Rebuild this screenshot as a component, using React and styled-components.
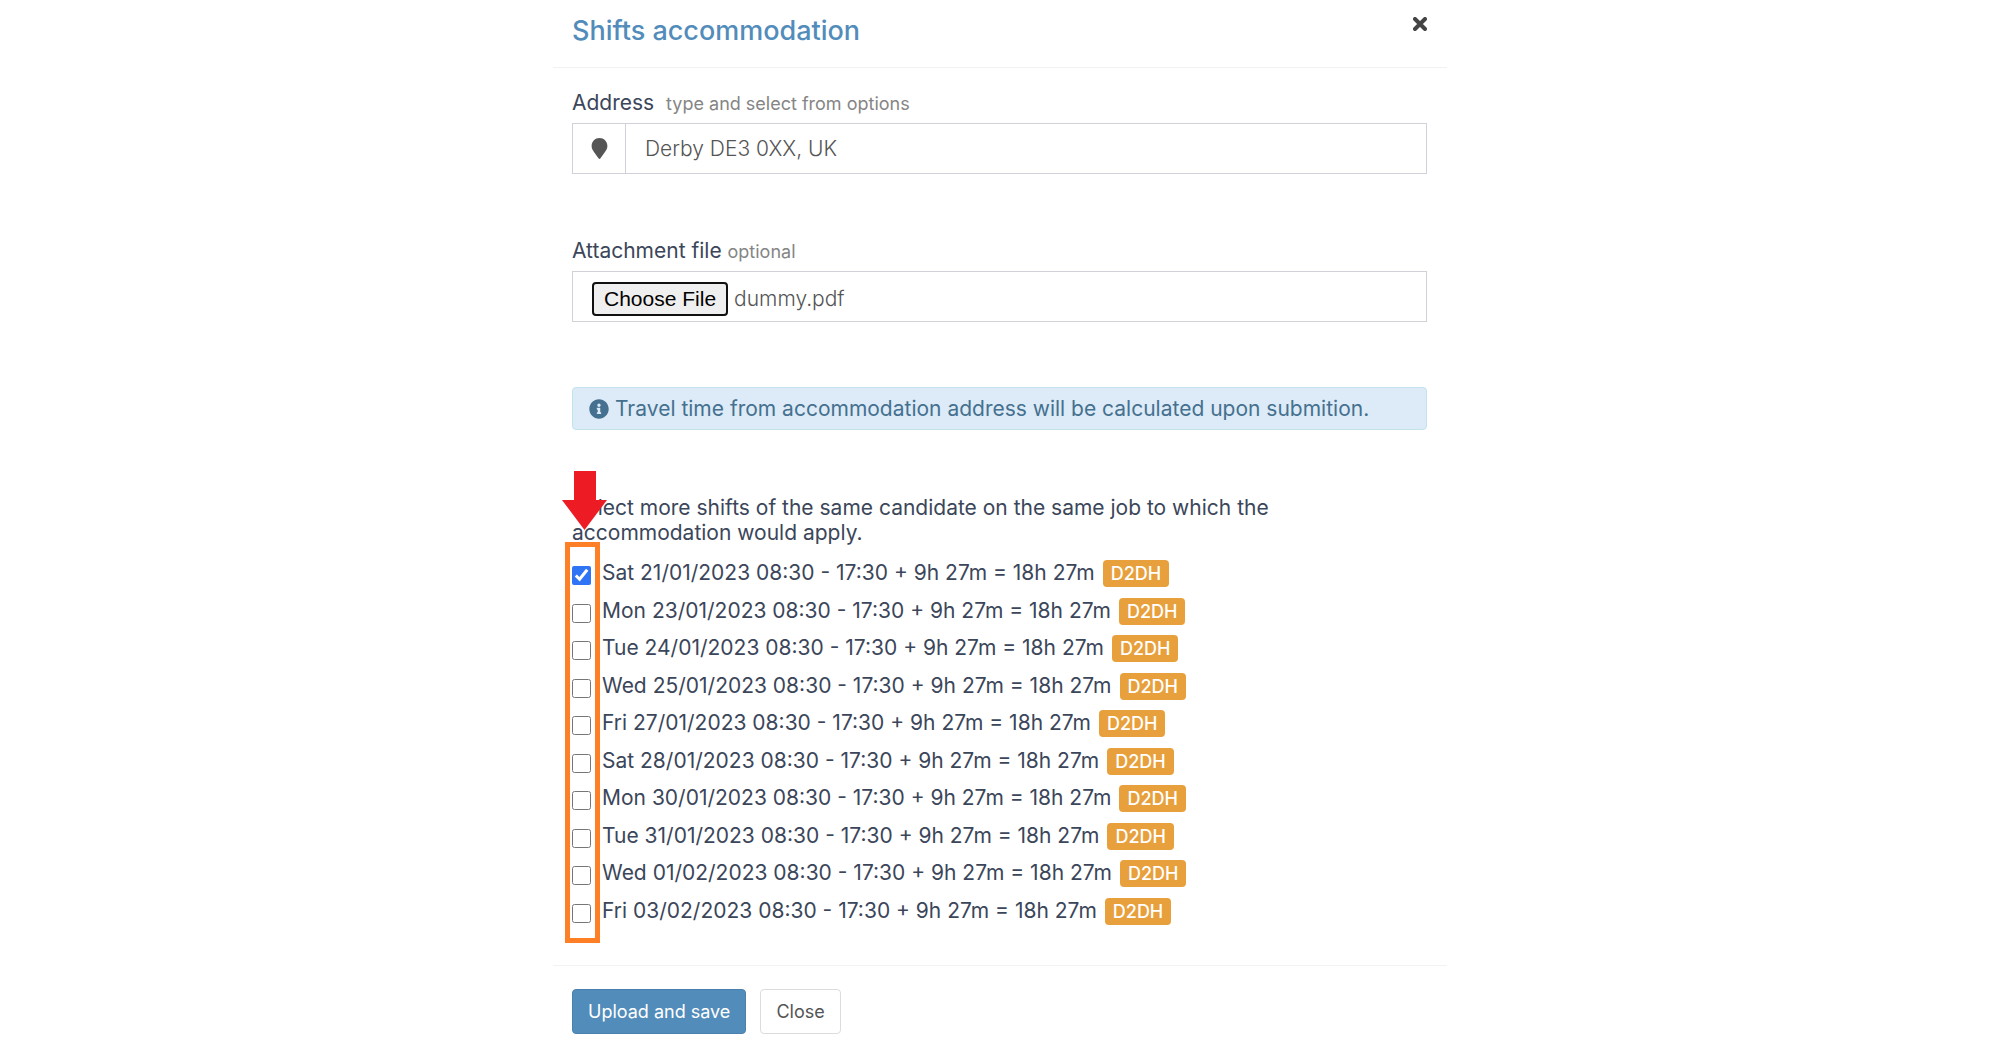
import React, { useEffect, useRef, useState } from "react";
import styled, { createGlobalStyle } from "styled-components";
import { FaInfoCircle, FaMapMarker } from "react-icons/fa";

const SHIFTS = [
    "Sat 21/01/2023 08:30 - 17:30 + 9h 27m = 18h 27m",
    "Mon 23/01/2023 08:30 - 17:30 + 9h 27m = 18h 27m",
    "Tue 24/01/2023 08:30 - 17:30 + 9h 27m = 18h 27m",
    "Wed 25/01/2023 08:30 - 17:30 + 9h 27m = 18h 27m",
    "Fri 27/01/2023 08:30 - 17:30 + 9h 27m = 18h 27m",
    "Sat 28/01/2023 08:30 - 17:30 + 9h 27m = 18h 27m",
    "Mon 30/01/2023 08:30 - 17:30 + 9h 27m = 18h 27m",
    "Tue 31/01/2023 08:30 - 17:30 + 9h 27m = 18h 27m",
    "Wed 01/02/2023 08:30 - 17:30 + 9h 27m = 18h 27m",
    "Fri 03/02/2023 08:30 - 17:30 + 9h 27m = 18h 27m",
];

const App = () => {
    const [address, setAddress] = useState("Derby DE3 0XX, UK");
    const [selected, setSelected] = useState([0]);
    const fileRef = useRef(null);

    // a file input can only be prefilled through a DataTransfer
    useEffect(() => {
        const transfer = new DataTransfer();
        transfer.items.add(new File([""], "dummy.pdf", { type: "application/pdf" }));
        fileRef.current.files = transfer.files;
    }, []);

    const toggleShift = (index) => {
        setSelected((current) => current.includes(index)
            ? current.filter((i) => i !== index)
            : [...current, index]);
    };

    return <>
        <GlobalStyle />
        <Modal onSubmit={(event) => event.preventDefault()}>
            <Header>
                <Title>Shifts accommodation</Title>
                <DismissButton type="button" aria-label="Close dialog">
                    <svg width="14" height="14" viewBox="0 0 14 14">
                        <path d="M2 2L12 12M12 2L2 12" stroke="#444" strokeWidth="4" strokeLinecap="round" />
                    </svg>
                </DismissButton>
            </Header>
            <Body>
                <Field>
                    <Label htmlFor="address">Address <Hint $spaced>type and select from options</Hint></Label>
                    <InputGroup>
                        <Addon><FaMapMarker size={21} /></Addon>
                        <AddressInput
                            id="address"
                            type="text"
                            value={address}
                            onChange={(event) => setAddress(event.target.value)}
                        />
                    </InputGroup>
                </Field>
                <Field>
                    <Label htmlFor="attachment">Attachment file <Hint>optional</Hint></Label>
                    <InputGroup>
                        <FileInput id="attachment" type="file" ref={fileRef} />
                    </InputGroup>
                </Field>
                <Alert>
                    <FaInfoCircle size={20} />
                    <span>Travel time from accommodation address will be calculated upon submition.</span>
                </Alert>
                <Shifts>
                    <Question>
                        Select more shifts of the same candidate on the same job to which the accommodation would apply.
                    </Question>
                    <ShiftList>
                        {SHIFTS.map((shift, index) => <ShiftRow key={shift}>
                            <Checkbox
                                type="checkbox"
                                checked={selected.includes(index)}
                                onChange={() => toggleShift(index)}
                            />
                            <span>{shift}</span>
                            <Badge>D2DH</Badge>
                        </ShiftRow>)}
                        <Highlight />
                    </ShiftList>
                    <Arrow width="45" height="59" viewBox="0 0 45 59" aria-hidden="true">
                        <path d="M12 0H34V29H45L22.500 59L0 29H12Z" fill="#ed1c24" />
                    </Arrow>
                </Shifts>
            </Body>
            <Footer>
                <Button type="submit" $primary>Upload and save</Button>
                <Button type="button">Close</Button>
            </Footer>
        </Modal>
    </>;
};

const GlobalStyle = createGlobalStyle`
    * {
        box-sizing: border-box;
    }

    body {
        margin: 0;
        background: #fff;
        color: #3b465a;
        font-family: Inter, "Liberation Sans", sans-serif;
        font-size: 21px;
        font-weight: 400;
        line-height: 25px;
    }
`;

const Modal = styled.form`
    max-width: 894px;
    margin: 0 auto;
`;

const Header = styled.header`
    display: flex;
    justify-content: space-between;
    align-items: flex-start;
    padding: 12px 20px 18px 19px;
    border-bottom: 1px solid #f1f2f3;
`;

const Title = styled.h4`
    margin: 0;
    color: #528cba;
    font-size: 27px;
    font-weight: 500;
    line-height: 37px;
`;

const DismissButton = styled.button`
    display: flex;
    margin-top: 5px;
    padding: 0;
    border: 0;
    background: none;
    cursor: pointer;
`;

const Body = styled.div`
    padding: 22px 20px 40px 19px;
`;

const Field = styled.div`
    margin-bottom: 64px;
`;

const Label = styled.label`
    display: block;
    margin-bottom: 7px;
`;

const Hint = styled.small`
    margin-left: ${(props) => (props.$spaced ? "6px" : "0")};
    color: #858585;
    font-size: 18px;
`;

const InputGroup = styled.div`
    display: flex;
    height: 51px;
    border: 1px solid #d0d1d9;
    color: #555;
    font-weight: 300;
`;

const Addon = styled.span`
    display: flex;
    align-items: center;
    justify-content: center;
    width: 53px;
    border-right: 1px solid #d0d1d9;
`;

const AddressInput = styled.input`
    flex: 1;
    padding: 0 19px;
    border: 0;
    color: inherit;
    font: inherit;
    outline: 0;
`;

const FileInput = styled.input`
    flex: 1;
    padding: 10px 19px;
    color: inherit;
    font: inherit;

    &::file-selector-button {
        height: 34px;
        margin: 0 6px 0 0;
        padding: 0 10px;
        border: 2px solid #101010;
        border-radius: 4px;
        background: #efefef;
        color: #000;
        font-family: "Liberation Sans", Arial, sans-serif;
        font-size: 21px;
        font-weight: 400;
    }
`;

const Alert = styled.div`
    display: flex;
    align-items: center;
    gap: 6px;
    margin-top: 65px;
    padding: 8px 16px;
    border: 1px solid #c3e3ec;
    border-radius: 4px;
    background: #dcebf7;
    color: #45708f;
`;

const Shifts = styled.div`
    position: relative;
    margin-top: 65px;
`;

const Question = styled.p`
    max-width: 720px;
    margin: 0 0 13px;
`;

const ShiftList = styled.div`
    position: relative;
    display: flex;
    flex-direction: column;
    justify-content: space-between;
    min-height: 367px;
`;

const ShiftRow = styled.label`
    display: flex;
    align-items: center;
`;

const Checkbox = styled.input`
    width: 19px;
    height: 19px;
    margin: 6px 11px 0 0;
    accent-color: #2f74f5;
`;

const Badge = styled.span`
    margin: 2px 0 0 8px;
    padding: 1px 8px;
    border-radius: 4px;
    background: #e8a03c;
    color: #fff;
    font-size: 18px;
    font-weight: 500;
`;

// orange frame drawn over the checkbox column
const Highlight = styled.div`
    position: absolute;
    top: -16px;
    bottom: -18px;
    left: -7px;
    width: 35px;
    border: 5px solid #ff7f27;
    pointer-events: none;
`;

const Arrow = styled.svg`
    position: absolute;
    top: -24px;
    left: -10px;
    pointer-events: none;
`;

const Footer = styled.footer`
    display: flex;
    gap: 14px;
    padding: 23px 19px 20px;
    border-top: 1px solid #f1f2f3;
`;

const Button = styled.button`
    height: 45px;
    padding: 0 15px;
    border: 1px solid ${(props) => (props.$primary ? "#4a80ad" : "#dcdcdc")};
    border-radius: 4px;
    background: ${(props) => (props.$primary ? "#528cba" : "#fff")};
    color: ${(props) => (props.$primary ? "#fff" : "#555")};
    font-family: inherit;
    font-size: 18px;
    font-weight: 400;
    cursor: pointer;
`;

export default App;
